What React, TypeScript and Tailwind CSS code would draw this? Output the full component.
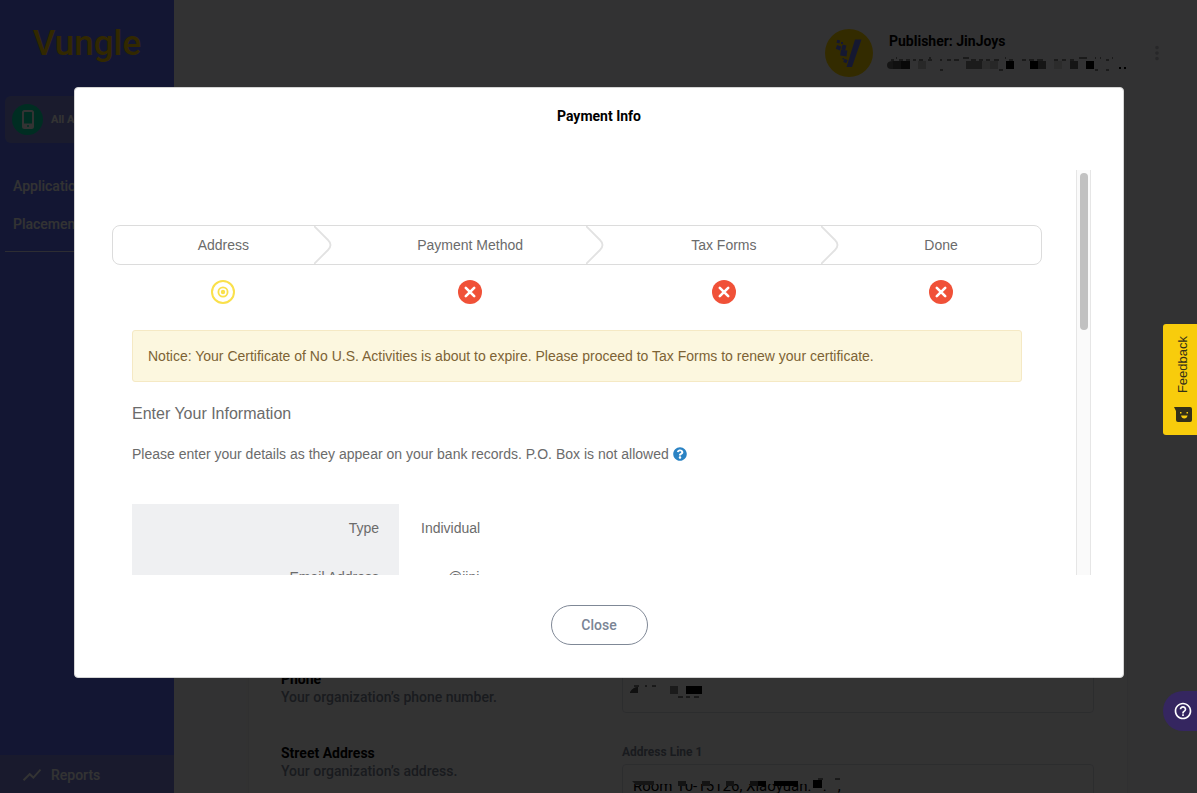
import React from "react";
import { MdHelpOutline, MdMoreVert, MdShowChart, MdStayPrimaryPortrait } from "react-icons/md";
import { FaQuestionCircle } from "react-icons/fa";

type StepState = "current" | "missing";

const steps: { label: string; state: StepState }[] = [
  { label: "Address", state: "current" },
  { label: "Payment Method", state: "missing" },
  { label: "Tax Forms", state: "missing" },
  { label: "Done", state: "missing" },
];

const stepColumns = "grid grid-cols-[221fr_273fr_235fr_200fr]";

function PhoneIcon() {
  return (
    <svg viewBox="0 0 12 19" className="h-[19px] w-3" fill="none" stroke="currentColor" aria-hidden="true">
      <rect x="1" y="1" width="10" height="17" rx="1.500" strokeWidth="2" />
      <path d="M1 15.500h10" strokeWidth="4" />
      <circle cx="6" cy="16" r="1" fill="#00e0a8" stroke="none" />
    </svg>
  );
}

function Sidebar() {
  return (
    <aside className="flex w-[174px] shrink-0 flex-col bg-[#6070ff] text-white">
      <div className="flex h-24 justify-center pt-5 text-[35px] leading-[48px] font-medium text-[#f8c800]">
        Vungle
      </div>
      <nav className="flex flex-1 flex-col px-[5px]">
        <a href="#apps" className="flex h-[47px] items-center gap-2 rounded-md bg-[#8288e0] pl-[7px] text-[11px] font-bold">
          <span className="flex size-[31px] items-center justify-center rounded-full bg-[#00e0a8]">
            <PhoneIcon />
          </span>
          <span className="pt-[2px]">All Apps</span>
        </a>
        <div className="mt-6 flex flex-col border-b border-white/80 pb-2 pl-2 text-[14px] font-medium">
          <a href="#applications" className="leading-[38px]">Applications</a>
          <a href="#placements" className="leading-[38px]">Placements</a>
        </div>
      </nav>
      <a href="#reports" className="flex h-[38px] items-center gap-2 bg-[#7c84e0] pt-[2px] pl-[21px] text-[14px] font-medium">
        <MdShowChart className="size-[22px]" />
        Reports
      </a>
    </aside>
  );
}

function AvatarMark() {
  return (
    <svg viewBox="0 0 48 48" className="size-12" aria-hidden="true">
      <circle cx="24" cy="24" r="24" fill="#ffd400" />
      <path d="M30 10.500h6.500L27 38h-5.500z" fill="#6b78f5" />
      <g fill="#6b78f5">
        <rect x="12" y="11" width="3" height="3" transform="rotate(15 13 12)" />
        <rect x="16" y="13" width="2" height="2" />
        <rect x="11.500" y="16.500" width="4.500" height="4" transform="rotate(20 13 18)" />
        <rect x="17" y="16" width="4" height="5" transform="rotate(15 19 18)" />
        <rect x="15.500" y="21" width="6.500" height="6" transform="rotate(8 18 24)" />
        <rect x="19" y="30" width="3.500" height="3.500" transform="rotate(20 20 31)" />
        <rect x="17.500" y="29" width="1.500" height="1.500" />
      </g>
    </svg>
  );
}

function MaskedAccount() {
  return (
    <svg viewBox="0 0 240 14" className="h-[14px] w-60" aria-hidden="true">
      <path d="M0 8q0-4 6-4v8H4q-4 0-4-4z" fill="#6a6a6a" />
      <path d="M6 4h8v8H6z" fill="#505050" />
      <path d="M14 4h9v8h-9z" fill="#282828" />
      <path d="M31 4h8v8h-8z" fill="#c8c8c8" />
      <path d="M79 4h16v8H79z" fill="#888" />
      <path d="M103 4h8v8h-8z" fill="#c0c0c0" />
      <path d="M95 4h8v8h-8zM167 4h8v8h-8z" fill="#dcdcdc" />
      <path d="M119 4h8v8h-8zM143 4h8v8h-8zM199 4h8v8h-8z" fill="#000" />
      <path d="M151 4h8v8h-8zM183 4h8v8h-8z" fill="#6a6a6a" />
      <path
        d="M4 3h3M9 1h1M12 3h4M19 3h4M26 3h3M32 3h4M42 1h2M41 3h4M53 3h2M60 3h4M67 3h5M76 1h6M84 3h5M92 3h4M99 3h4M107 3h5M118 1h1M122 3h4M135 3h4M142 3h5M150 3h6M167 3h4M175 3h4M183 3h4M192 1h8M208 1h1M213 1h1M219 3h3M225 1h1M53 13h3M112 13h4M208 13h3M219 13h3"
        stroke="#111" strokeWidth="1"
      />
      <path d="M232 10h2v2h-2zM237 10h2v2h-2z" fill="#000" />
    </svg>
  );
}

function ProfileForm() {
  return (
    <section className="mr-[70px] ml-[75px] flex h-[720px] flex-col rounded bg-white pt-[564px] pr-[33px] pl-8 shadow">
      <div className="flex h-[74px]">
        <div className="w-[341px] shrink-0 text-[14px] leading-[18px]">
          <label htmlFor="phone" className="block font-bold text-black">Phone</label>
          <p className="font-medium text-[#7d8698]">Your organization’s phone number.</p>
        </div>
        <div className="relative h-[43px] flex-1">
          <input id="phone" className="h-full w-full rounded border border-[#dcdfe6] bg-transparent px-2" />
          <svg viewBox="0 0 72 16" className="absolute top-3 left-2 h-4 w-[72px]" aria-hidden="true">
            <path d="M0 10q3-5 8-5v6H0z" fill="#505050" />
            <path d="M4 4h5M15 4h2M22 4h4M48 15h5M56 15h4M64 15h5" stroke="#000" />
            <path d="M40 4h8v8h-8z" fill="#858585" />
            <path d="M56 4h16v8H56z" />
          </svg>
        </div>
      </div>
      <div className="flex">
        <div className="w-[341px] shrink-0 text-[14px] leading-[18px]">
          <p className="font-bold text-black">Street Address</p>
          <p className="font-medium text-[#7d8698]">Your organization’s address.</p>
        </div>
        <div className="flex flex-1 flex-col gap-1">
          <label htmlFor="line1" className="text-[12px] leading-4 font-bold text-[#7d8698]">Address Line 1</label>
          <div className="relative h-[43px]">
            <input
              id="line1"
              readOnly
              value="Room 10-15126, Xiaoyuan.   .   ,"
              className="h-full w-full rounded border border-[#dcdfe6] bg-transparent pl-[10px] text-[15px] text-black"
            />
            <svg viewBox="0 0 216 10" className="absolute top-[14px] left-[10px] h-[10px] w-[216px]" aria-hidden="true">
              <path d="M0 0h216v6H0z" fill="#fff" />
              <path d="M0 3h22v4H4z" fill="#707070" />
              <path d="M46 3h8v5h-8zM70 3h8v5h-8zM94 3h8v5h-8z" fill="#666" />
              <path d="M118 3h8v5h-8z" fill="#505050" />
              <path d="M126 3h8v5h-8zM142 3h24v5h-24zM181 2h9v8h-9z" />
              <path d="M186 1h5M203 1h5" stroke="#000" />
            </svg>
          </div>
        </div>
      </div>
    </section>
  );
}

function StepIcon({ state }: { state: StepState }) {
  if (state === "current") {
    return (
      <svg viewBox="0 0 24 24" className="size-6" fill="none" stroke="#fae04b" role="img" aria-label="In progress">
        <circle cx="12" cy="12" r="11" strokeWidth="2" />
        <circle cx="12" cy="12" r="4.600" strokeWidth="1.800" />
        <circle cx="12" cy="12" r="2.200" fill="#fae04b" stroke="none" />
      </svg>
    );
  }
  return (
    <svg viewBox="0 0 24 24" className="size-6" role="img" aria-label="Incomplete">
      <circle cx="12" cy="12" r="12" fill="#f05138" />
      <path d="M7.800 7.800l8.400 8.400M16.200 7.800l-8.400 8.400" stroke="#fff" strokeWidth="2.600" strokeLinecap="round" />
    </svg>
  );
}

function Steps() {
  return (
    <div className="flex flex-col gap-[15px]">
      <ol className={`${stepColumns} h-10 rounded-lg border border-[#dcdcdc]`}>
        {steps.map((step, i) => (
          <li key={step.label} className="relative flex items-center justify-center">
            {step.label}
            {i < steps.length - 1 && (
              <svg viewBox="0 0 18 38" className="absolute top-0 right-[2px] h-full w-[18px]" fill="none" aria-hidden="true">
                <path d="M0 0L14 14Q19 19 14 24L0 38" stroke="#e2e2e2" strokeWidth="1.800" />
              </svg>
            )}
          </li>
        ))}
      </ol>
      <div className={`${stepColumns} px-px`}>
        {steps.map((step) => (
          <div key={step.label} className="flex justify-center">
            <StepIcon state={step.state} />
          </div>
        ))}
      </div>
    </div>
  );
}

function PaymentDialog() {
  return (
    <div
      role="dialog"
      aria-modal="true"
      aria-labelledby="dialog-title"
      className="flex w-full flex-col items-center rounded border border-[#d4d4d4] bg-white pb-8"
    >
      <h2 id="dialog-title" className="mt-[18px] text-[14px] leading-5 font-bold text-black">Payment Info</h2>
      <div className="mt-11 flex h-[405px] w-full overflow-hidden pr-8 pl-[37px] font-['Liberation_Sans',Arial,sans-serif] text-[14px] text-[#6b6b6b]">
        <div className="mr-[34px] flex-1 pt-[55px]">
          <Steps />
          <div className="px-5">
            <p className="mt-[26px] flex h-[52px] items-center rounded-[3px] border border-[#f5e9c4] bg-[#fcf7df] px-[15px] text-[#7d6335]">
              Notice: Your Certificate of No U.S. Activities is about to expire. Please proceed to Tax Forms to renew your certificate.
            </p>
            <h3 className="mt-5 text-[16px] leading-6">Enter Your Information</h3>
            <p className="mt-[18px] flex items-center gap-1 leading-5">
              Please enter your details as they appear on your bank records. P.O. Box is not allowed
              <FaQuestionCircle className="size-[14px] text-[#2b83c4]" />
            </p>
            <dl className="mt-10 grid grid-cols-[267px_1fr] leading-[49px]">
              <dt className="bg-[#eff0f2] pr-5 text-right">Type</dt>
              <dd className="pl-[22px]">Individual</dd>
              <dt className="bg-[#eff0f2] pr-5 text-right">Email Address</dt>
              <dd className="pl-[49px]">@jinj</dd>
            </dl>
          </div>
        </div>
        <div className="w-[15px] border-x border-[#e6e6e6] bg-[#fafafa] px-[3px] pt-[3px]">
          <div className="h-[157px] w-2 rounded-full bg-[#c1c1c1]" />
        </div>
      </div>
      <button type="button" className="mt-[30px] h-10 w-[97px] rounded-full border border-[#7f8896] text-[14px] font-medium text-[#7a8494]">
        Close
      </button>
    </div>
  );
}

export default function App() {
  return (
    <div className="relative h-screen overflow-hidden bg-white font-[Roboto,sans-serif]">
      <div className="flex h-full">
        <Sidebar />
        <main className="min-w-0 flex-1 bg-[#fafafc]">
          <header className="flex h-[106px] items-center justify-end pr-[29px]">
            <AvatarMark />
            <div className="ml-[14px] flex w-[259px] flex-col gap-[6px] pb-[5px]">
              <p className="pl-[2px] text-[14px] leading-5 font-bold text-black">Publisher: JinJoys</p>
              <MaskedAccount />
            </div>
            <button type="button" aria-label="More" className="text-[#c4c4cc]">
              <MdMoreVert className="size-[22px]" />
            </button>
          </header>
          <ProfileForm />
        </main>
      </div>

      <div className="absolute inset-0 bg-black/80 pt-[87px] pr-[73px] pl-[74px]">
        <PaymentDialog />
      </div>

      <button
        type="button"
        className="absolute top-[324px] right-0 flex h-[111px] w-[34px] flex-col items-center justify-end gap-[14px] rounded-l-[3px] bg-[#f8cc0c] pb-[13px] pl-[5px] font-['Liberation_Sans',Arial,sans-serif] text-[#333019]"
      >
        <span className="rotate-180 text-[13px] leading-4 [writing-mode:vertical-rl]">Feedback</span>
        <svg viewBox="0 0 18 15" className="h-[15px] w-[18px] shrink-0" aria-hidden="true">
          <path d="M0 0h16a2 2 0 0 1 2 2v11a2 2 0 0 1-2 2H4a2 2 0 0 1-2-2V4z" fill="#333019" />
          <path d="M6 5h1.500v1.500H6zM12.500 5H14v1.500h-1.500z" fill="#f8cc0c" />
          <path d="M7 8.500h6.500q-.5 3-3.200 3t-3.300-3z" fill="#f8cc0c" />
        </svg>
      </button>
      <button
        type="button"
        aria-label="Help"
        className="absolute top-[691px] right-0 flex h-10 w-[34px] items-center justify-center rounded-l-full bg-[#352660] pl-[6px] text-white"
      >
        <MdHelpOutline className="size-5" />
      </button>
    </div>
  );
}
